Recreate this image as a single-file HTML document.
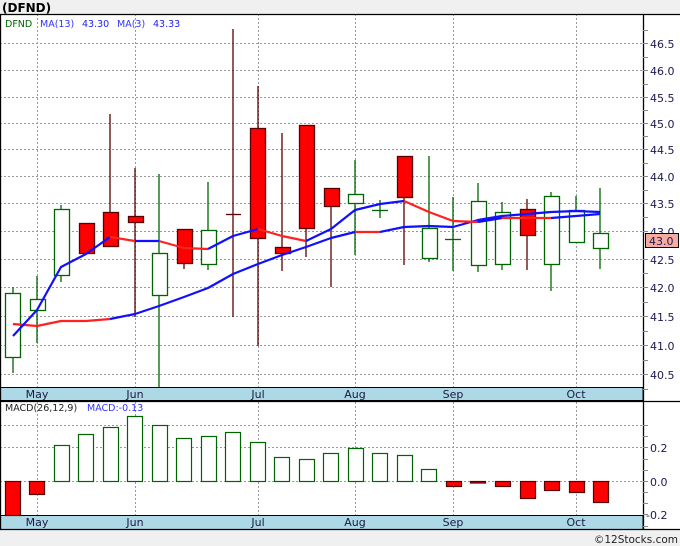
<!DOCTYPE html>
<html><head><meta charset="utf-8"><style>
html,body{margin:0;padding:0;background:#f0f0f0;}
svg{display:block;font-family:"DejaVu Sans","Liberation Sans",sans-serif;}
</style></head><body>
<svg width="680" height="546" viewBox="0 0 680 546" xmlns="http://www.w3.org/2000/svg">
<rect x="0" y="0" width="680" height="546" fill="#f0f0f0"/>
<text x="2" y="12" font-size="12" font-weight="bold" fill="#000">(DFND)</text>
<rect x="0" y="14" width="680" height="516" fill="#fff"/>
<g stroke="#999" stroke-width="1" stroke-dasharray="2,2">
<line x1="0" x2="643" y1="43.5" y2="43.5"/><line x1="0" x2="643" y1="70.5" y2="70.5"/>
<line x1="0" x2="643" y1="97.5" y2="97.5"/><line x1="0" x2="643" y1="123.5" y2="123.5"/>
<line x1="0" x2="643" y1="149.5" y2="149.5"/><line x1="0" x2="643" y1="176.5" y2="176.5"/>
<line x1="0" x2="643" y1="203.5" y2="203.5"/><line x1="0" x2="643" y1="231.5" y2="231.5"/>
<line x1="0" x2="643" y1="259.5" y2="259.5"/><line x1="0" x2="643" y1="287.5" y2="287.5"/>
<line x1="0" x2="643" y1="316.5" y2="316.5"/><line x1="0" x2="643" y1="345.5" y2="345.5"/>
<line x1="0" x2="643" y1="374.5" y2="374.5"/>
<line x1="0" x2="643" y1="425.5" y2="425.5"/><line x1="0" x2="643" y1="447.5" y2="447.5"/>
<line x1="0" x2="643" y1="481.5" y2="481.5"/>
<line x1="37.5" x2="37.5" y1="14" y2="530"/><line x1="135.5" x2="135.5" y1="14" y2="530"/>
<line x1="258.5" x2="258.5" y1="14" y2="530"/><line x1="355.5" x2="355.5" y1="14" y2="530"/>
<line x1="453.5" x2="453.5" y1="14" y2="530"/><line x1="576.5" x2="576.5" y1="14" y2="530"/>
</g>
<text x="5" y="27" font-size="9.5" fill="#006400">DFND</text>
<text x="40" y="27" font-size="9.5" fill="#3333ff">MA(13)</text>
<text x="82" y="27" font-size="9.5" fill="#2222ee">43.30</text>
<text x="117" y="27" font-size="9.5" fill="#3333ff">MA(3)</text>
<text x="153" y="27" font-size="9.5" fill="#2222ee">43.33</text>
<g stroke-width="1.3">
<g stroke="#006400" fill="#fff">
<line x1="13" x2="13" y1="287" y2="373"/><rect x="5.5" y="293.5" width="15" height="64"/>
<line x1="37" x2="37" y1="276" y2="343"/><rect x="30.5" y="299.5" width="15" height="11"/>
<line x1="61" x2="61" y1="205" y2="282"/><rect x="54.5" y="209.5" width="15" height="66"/>
<line x1="159" x2="159" y1="174" y2="388"/><rect x="152.5" y="253.5" width="15" height="42"/>
<line x1="208" x2="208" y1="182" y2="270"/><rect x="201.5" y="230.5" width="15" height="34"/>
<line x1="355" x2="355" y1="160" y2="255"/><rect x="348.5" y="194.5" width="15" height="9"/>
<line x1="380" x2="380" y1="200" y2="218"/><line x1="372" x2="388" y1="210.5" y2="210.5"/>
<line x1="429" x2="429" y1="156" y2="262"/><rect x="422.5" y="228.5" width="15" height="30"/>
<line x1="453" x2="453" y1="197" y2="271"/><line x1="445" x2="461" y1="239.5" y2="239.5"/>
<line x1="478" x2="478" y1="183" y2="272"/><rect x="471.5" y="201.5" width="15" height="64"/>
<line x1="502" x2="502" y1="202" y2="270"/><rect x="495.5" y="212.5" width="15" height="52"/>
<line x1="551" x2="551" y1="192" y2="291"/><rect x="544.5" y="196.5" width="15" height="68"/>
<line x1="576" x2="576" y1="196" y2="242"/><rect x="569.5" y="210.5" width="15" height="32"/>
<line x1="600" x2="600" y1="188" y2="269"/><rect x="593.5" y="233.5" width="15" height="15"/>
</g>
<g stroke="#5a0000" fill="#ff0000">
<line x1="86" x2="86" y1="223" y2="255"/><rect x="79.5" y="223.5" width="15" height="30"/>
<line x1="110" x2="110" y1="114" y2="246"/><rect x="103.5" y="212.5" width="15" height="34"/>
<line x1="135" x2="135" y1="168" y2="317"/><rect x="128.5" y="216.5" width="15" height="6"/>
<line x1="184" x2="184" y1="229" y2="269"/><rect x="177.5" y="229.5" width="15" height="34"/>
<line x1="233" x2="233" y1="29" y2="317"/><line x1="226" x2="241" y1="214.5" y2="214.5"/>
<line x1="258" x2="258" y1="86" y2="346"/><rect x="250.5" y="128.5" width="15" height="110"/>
<line x1="282" x2="282" y1="133" y2="271"/><rect x="275.5" y="247.5" width="15" height="6"/>
<line x1="306" x2="306" y1="125" y2="257"/><rect x="299.5" y="125.5" width="15" height="103"/>
<line x1="331" x2="331" y1="188" y2="287"/><rect x="324.5" y="188.5" width="15" height="18"/>
<line x1="404" x2="404" y1="156" y2="265"/><rect x="397.5" y="156.5" width="15" height="41"/>
<line x1="527" x2="527" y1="199" y2="270"/><rect x="520.5" y="209.5" width="15" height="26"/>
</g></g>
<g fill="none" stroke-width="2.2" stroke-linejoin="round">
<polyline stroke="#ff2020" points="13,324 37,326 61,321 86,321 110,319"/>
<polyline stroke="#1010ff" points="110,319 135,314 159,306 184,297 208,288 233,274 258,264 282,255 306,247 331,238 355,232"/>
<polyline stroke="#ff2020" points="355,232 380,232"/>
<polyline stroke="#1010ff" points="380,232 404,227 429,226 453,227 478,220 502,216 527,214 551,212 576,211 600,212"/>
<polyline stroke="#1010ff" points="13,336 37,310 61,267 86,254 110,237"/>
<polyline stroke="#ff2020" points="110,237 135,241"/>
<polyline stroke="#1010ff" points="135,241 159,241"/>
<polyline stroke="#ff2020" points="159,241 184,248 208,249"/>
<polyline stroke="#1010ff" points="208,249 233,236 258,229"/>
<polyline stroke="#ff2020" points="258,229 282,236 306,241"/>
<polyline stroke="#1010ff" points="306,241 331,229 355,210 380,204 404,201"/>
<polyline stroke="#ff2020" points="404,201 429,212 453,221 478,222"/>
<polyline stroke="#1010ff" points="478,222 502,218"/>
<polyline stroke="#ff2020" points="502,218 527,218 551,218"/>
<polyline stroke="#1010ff" points="551,218 576,216 600,214"/>
</g>
<rect x="0" y="387.5" width="643" height="13" fill="#add8e6" stroke="#000"/>
<rect x="0" y="515.5" width="643" height="14" fill="#add8e6" stroke="#000"/>
<g font-size="11" fill="#1a1a40" text-anchor="middle">
<text x="37" y="398">May</text><text x="135" y="398">Jun</text><text x="258" y="398">Jul</text>
<text x="355" y="398">Aug</text><text x="453" y="398">Sep</text><text x="576" y="398">Oct</text>
<text x="37" y="526">May</text><text x="135" y="526">Jun</text><text x="258" y="526">Jul</text>
<text x="355" y="526">Aug</text><text x="453" y="526">Sep</text><text x="576" y="526">Oct</text>
</g>
<text x="5" y="411" font-size="9.5" fill="#222">MACD(26,12,9)</text>
<text x="87" y="411" font-size="9.5" fill="#3333ff">MACD:-0.13</text>
<g stroke="#006400" fill="#fff" stroke-width="1.2">
<rect x="54.5" y="445.5" width="15" height="36"/><rect x="78.5" y="434.5" width="15" height="47"/>
<rect x="103.5" y="427.5" width="15" height="54"/><rect x="127.5" y="416.5" width="15" height="65"/>
<rect x="152.5" y="425.5" width="15" height="56"/><rect x="176.5" y="438.5" width="15" height="43"/>
<rect x="201.5" y="436.5" width="15" height="45"/><rect x="225.5" y="432.5" width="15" height="49"/>
<rect x="250.5" y="442.5" width="15" height="39"/><rect x="274.5" y="457.5" width="15" height="24"/>
<rect x="299.5" y="459.5" width="15" height="22"/><rect x="323.5" y="453.5" width="15" height="28"/>
<rect x="348.5" y="448.5" width="15" height="33"/><rect x="372.5" y="453.5" width="15" height="28"/>
<rect x="397.5" y="455.5" width="15" height="26"/><rect x="421.5" y="469.5" width="15" height="12"/>
</g>
<g stroke="#5a0000" fill="#ff0000" stroke-width="1.2">
<rect x="5.5" y="481.5" width="15" height="34"/><rect x="29.5" y="481.5" width="15" height="13"/>
<rect x="446.5" y="481.5" width="15" height="5"/><rect x="470.5" y="481.5" width="15" height="1.5"/>
<rect x="495.5" y="481.5" width="15" height="5"/><rect x="520.5" y="481.5" width="15" height="17"/>
<rect x="544.5" y="481.5" width="15" height="9"/><rect x="569.5" y="481.5" width="15" height="11"/>
<rect x="593.5" y="481.5" width="15" height="21"/>
</g>
<g stroke="#000" stroke-width="1.3" fill="none">
<line x1="0" x2="680" y1="14.5" y2="14.5"/>
<line x1="0" x2="680" y1="401.5" y2="401.5"/>
<line x1="0" x2="680" y1="529.5" y2="529.5"/>
<line x1="0.5" x2="0.5" y1="14" y2="530"/>
<line x1="643.5" x2="643.5" y1="14" y2="530"/>
</g>
<g stroke="#888" stroke-width="1">
<line x1="643" x2="648" y1="30.5" y2="30.5"/><line x1="643" x2="648" y1="43.5" y2="43.5"/>
<line x1="643" x2="648" y1="57.5" y2="57.5"/><line x1="643" x2="648" y1="70.5" y2="70.5"/>
<line x1="643" x2="648" y1="84.5" y2="84.5"/><line x1="643" x2="648" y1="97.5" y2="97.5"/>
<line x1="643" x2="648" y1="110.5" y2="110.5"/><line x1="643" x2="648" y1="123.5" y2="123.5"/>
<line x1="643" x2="648" y1="136.5" y2="136.5"/><line x1="643" x2="648" y1="149.5" y2="149.5"/>
<line x1="643" x2="648" y1="163.5" y2="163.5"/><line x1="643" x2="648" y1="176.5" y2="176.5"/>
<line x1="643" x2="648" y1="190.5" y2="190.5"/><line x1="643" x2="648" y1="203.5" y2="203.5"/>
<line x1="643" x2="648" y1="217.5" y2="217.5"/><line x1="643" x2="648" y1="231.5" y2="231.5"/>
<line x1="643" x2="648" y1="259.5" y2="259.5"/><line x1="643" x2="648" y1="273.5" y2="273.5"/>
<line x1="643" x2="648" y1="287.5" y2="287.5"/><line x1="643" x2="648" y1="302.5" y2="302.5"/>
<line x1="643" x2="648" y1="316.5" y2="316.5"/><line x1="643" x2="648" y1="331.5" y2="331.5"/>
<line x1="643" x2="648" y1="345.5" y2="345.5"/><line x1="643" x2="648" y1="360.5" y2="360.5"/>
<line x1="643" x2="648" y1="374.5" y2="374.5"/><line x1="643" x2="648" y1="389.5" y2="389.5"/>
<line x1="643" x2="648" y1="425.5" y2="425.5"/><line x1="643" x2="648" y1="436.5" y2="436.5"/>
<line x1="643" x2="648" y1="447.5" y2="447.5"/><line x1="643" x2="648" y1="459.5" y2="459.5"/>
<line x1="643" x2="648" y1="470.5" y2="470.5"/><line x1="643" x2="648" y1="481.5" y2="481.5"/>
<line x1="643" x2="648" y1="492.5" y2="492.5"/><line x1="643" x2="648" y1="503.5" y2="503.5"/>
<line x1="643" x2="648" y1="514.5" y2="514.5"/><line x1="643" x2="648" y1="526.5" y2="526.5"/>
</g>
<g font-size="11" fill="#1a1a50">
<text x="650" y="48">46.5</text><text x="650" y="75">46.0</text><text x="650" y="102">45.5</text>
<text x="650" y="128">45.0</text><text x="650" y="154">44.5</text><text x="650" y="181">44.0</text>
<text x="650" y="208">43.5</text><text x="650" y="236">43.0</text><text x="650" y="264">42.5</text>
<text x="650" y="292">42.0</text><text x="650" y="321">41.5</text><text x="650" y="350">41.0</text>
<text x="650" y="379">40.5</text>
<text x="650" y="452">0.2</text><text x="650" y="486">0.0</text><text x="646" y="519">-0.2</text>
</g>
<rect x="645.5" y="233.5" width="33" height="14" fill="#f7aaa0" stroke="#000"/>
<text x="649" y="245" font-size="11" fill="#1a1a50">43.0</text>
<text x="678" y="543" font-size="10.5" fill="#222" text-anchor="end">©12Stocks.com</text>
</svg>
</body></html>
